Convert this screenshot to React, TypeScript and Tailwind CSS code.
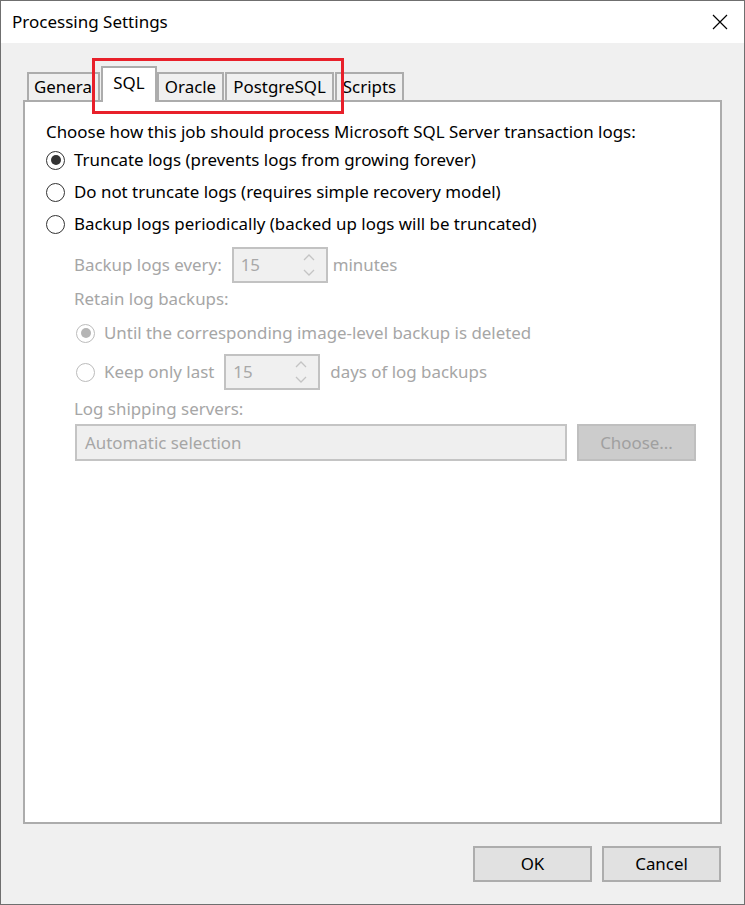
import React from "react";

const FONT = { fontFamily: '"Noto Sans", "Open Sans", sans-serif' };

function Radio({ checked, disabled }: { checked?: boolean; disabled?: boolean }) {
  const ring = disabled ? "border-[#bcbcbc]" : "border-[#333333]";
  const dot = disabled ? "bg-[#b5b5b5]" : "bg-[#333333]";
  return (
    <span
      className={`inline-flex items-center justify-center w-[19px] h-[19px] rounded-full border-[1.5px] ${ring} bg-white shrink-0`}
    >
      {checked && <span className={`w-[10px] h-[10px] rounded-full ${dot}`} />}
    </span>
  );
}

function Spin({ value }: { value: string }) {
  return (
    <div className="w-[96px] h-[36px] border-2 border-[#c2c2c2] bg-[#f0f0f0] flex items-center pl-[7px] pr-[10px] justify-between">
      <span className="text-[#a8a8a8]">{value}</span>
      <svg width="14" height="26" viewBox="0 0 14 26" fill="none" stroke="#c4c4c4" strokeWidth="1.3">
        <path d="M2 8 L7 3 L12 8" />
        <path d="M2 18 L7 23 L12 18" />
      </svg>
    </div>
  );
}

function Tab({ label, w, selected, left, ml }: { label: string; w: string; selected?: boolean; left?: boolean; ml?: string }) {
  if (selected) {
    return (
      <div
        className={`${w} ${ml ?? ""} h-[36px] -mb-[2px] border-2 border-b-0 border-[#acacac] bg-white flex items-center justify-center relative z-10 text-black`}
      >
        <span className="-mt-[4px]">{label}</span>
      </div>
    );
  }
  return (
    <div
      className={`${w} ${ml ?? ""} h-[28px] border-2 border-b-0 border-[#acacac] bg-[#f0f0f0] flex items-center ${left ? "justify-start pl-[5px]" : "justify-center"} text-black whitespace-nowrap`}
    >
      <span>{label}</span>
    </div>
  );
}

export default function App() {
  return (
    <div
      className="w-[745px] h-[905px] border border-[#6f6f6f] bg-[#f0f0f0] flex flex-col relative text-[16.9px] leading-[24px]"
      style={FONT}
    >
      {/* Title bar */}
      <div className="h-[42px] bg-white flex items-center justify-between pl-[11px] pr-[16px] shrink-0">
        <span className="text-[17px] text-black">Processing Settings</span>
        <svg width="16" height="16" viewBox="0 0 16 16" stroke="#000" strokeWidth="1.2">
          <path d="M1 1 L15 15 M15 1 L1 15" />
        </svg>
      </div>

      {/* Body */}
      <div className="flex-1 flex flex-col px-[22px] pb-[22px]">
        {/* Tabs */}
        <div className="flex items-end pl-[4px] mt-[23px]">
          <Tab label="Genera" w="w-[73px]" left />
          <Tab label="SQL" w="w-[56px]" selected ml="ml-[1px]" />
          <Tab label="Oracle" w="w-[67px]" />
          <Tab label="PostgreSQL" w="w-[109px]" ml="ml-[1px]" />
          <Tab label="Scripts" w="w-[69px]" ml="ml-[1px]" />
        </div>

        {/* Panel */}
        <div className="flex-1 border-2 border-[#acacac] bg-white flex flex-col pt-[18px] pl-[21px] text-black">
          <div className="h-[24px] flex items-center whitespace-nowrap">
            Choose how this job should process Microsoft SQL Server transaction logs:
          </div>
          <div className="h-[32px] flex items-center gap-[9px]">
            <Radio checked />
            <span>Truncate logs (prevents logs from growing forever)</span>
          </div>
          <div className="h-[32px] flex items-center gap-[9px]">
            <Radio />
            <span>Do not truncate logs (requires simple recovery model)</span>
          </div>
          <div className="h-[32px] flex items-center gap-[9px]">
            <Radio />
            <span>Backup logs periodically (backed up logs will be truncated)</span>
          </div>

          <div className="pl-[28px] flex flex-col text-[#a6a6a6]">
            <div className="mt-[7px] h-[36px] flex items-center">
              <span>Backup logs every:</span>
              <div className="ml-[10px]">
                <Spin value="15" />
              </div>
              <span className="ml-[5px]">minutes</span>
            </div>
            <div className="mt-[4px] h-[24px] flex items-center">Retain log backups:</div>
            <div className="mt-[6px] h-[32px] flex items-center gap-[9px] pl-[2px]">
              <Radio checked disabled />
              <span>Until the corresponding image-level backup is deleted</span>
            </div>
            <div className="mt-[5px] h-[36px] flex items-center pl-[2px]">
              <Radio disabled />
              <span className="ml-[9px]">Keep only last</span>
              <div className="ml-[10px]">
                <Spin value="15" />
              </div>
              <span className="ml-[10px]">days of log backups</span>
            </div>
            <div className="mt-[7px] h-[24px] flex items-center">Log shipping servers:</div>
            <div className="mt-[3px] flex items-center gap-[10px] pl-[1px]">
              <div className="w-[492px] h-[37px] border-2 border-[#c4c4c4] bg-[#efefef] flex items-center pl-[8px]">
                Automatic selection
              </div>
              <div className="w-[119px] h-[37px] border-2 border-[#bfbfbf] bg-[#cccccc] flex items-center justify-center text-[#a0a0a0]">
                Choose...
              </div>
            </div>
          </div>
        </div>

        {/* Buttons */}
        <div className="flex justify-end gap-[10px] mt-[22px] pr-[1px]">
          <div className="w-[119px] h-[36px] border-2 border-[#adadad] bg-[#e1e1e1] flex items-center justify-center text-black">
            OK
          </div>
          <div className="w-[119px] h-[36px] border-2 border-[#adadad] bg-[#e1e1e1] flex items-center justify-center text-black">
            Cancel
          </div>
        </div>
      </div>

      {/* Red highlight annotation */}
      <div className="absolute left-[91px] top-[57px] w-[252px] h-[56px] border-[3px] border-[#e8202a] pointer-events-none z-20" />
    </div>
  );
}
